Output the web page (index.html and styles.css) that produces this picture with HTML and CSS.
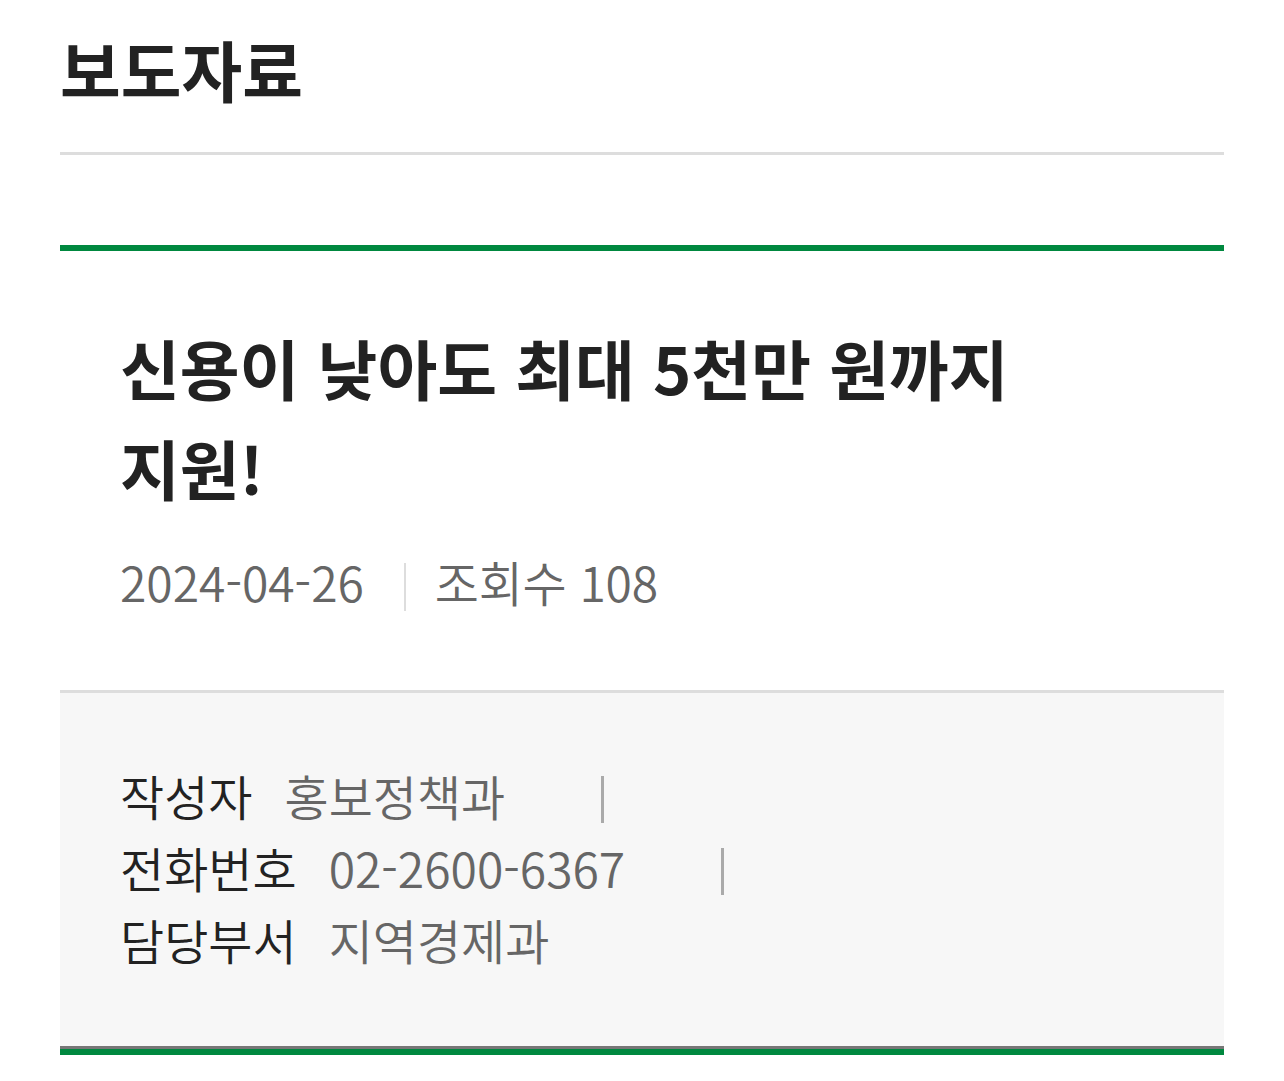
FILE: index.html
```html
<!DOCTYPE html>
<html lang="ko">
	<head>
		<meta charset="UTF-8">
		<title>보도자료</title>
		<link rel="stylesheet" href="styles.css">
	</head>
	<body>
		<div id="container">
			<div class="page-head">
				<h1>보도자료</h1>
			</div>
			<div class="board-view">
				<div class="view-head">
					<h2 class="subject">신용이 낮아도 최대 5천만 원까지 지원!</h2>
					<div class="meta">
						<span class="date">2024-04-26</span>
						<span class="bar"></span>
						<span class="hit">조회수 108</span>
					</div>
				</div>
				<ul class="info">
					<li><span class="label">작성자</span><span class="value">홍보정책과</span></li>
					<li><span class="label">전화번호</span><span class="value">02-2600-6367</span></li>
					<li><span class="label">담당부서</span><span class="value">지역경제과</span></li>
				</ul>
				<div class="view-body"></div>
			</div>
		</div>
	</body>
</html>
```

FILE: styles.css
```css
/* 기본 여백 제거 */
* {
	margin: 0;
	padding: 0;
	box-sizing: border-box;
}
body {
	font-family: "Noto Sans CJK KR", "Noto Sans", sans-serif;
	color: #222;
	background: #fff;
}
ul {
	list-style: none;
}
#container {
	padding: 0 60px;
}
/* 페이지 제목 */
.page-head {
	padding: 24px 0 40px;
	border-bottom: 3px solid #ddd;
}
.page-head h1 {
	font-size: 66px;
	font-weight: 700;
	line-height: 88px;
}
/* 게시물 상단 */
.board-view {
	margin-top: 90px;
	border-top: 6px solid #00883f;
}
.view-head {
	padding: 66px 60px 79px;
}
.subject {
	font-size: 65px;
	font-weight: 700;
	line-height: 100px;
	word-break: keep-all;
	padding-right: 100px;
}
.meta {
	display: flex;
	align-items: flex-start;
	margin-top: 34px;
	font-size: 48px;
	font-weight: 350;
	line-height: 60px;
	color: #666;
}
.meta .bar {
	width: 2px;
	height: 48px;
	margin: 12px 29px 0 40px;
	background: #ddd;
}
.meta .hit {
	letter-spacing: -0.3px;
}
/* 작성자 정보 */
.info {
	padding: 66px 60px 71px;
	background: #f7f7f7;
	border-top: 3px solid #ddd;
	border-bottom: 3px solid #777;
	font-size: 48px;
	font-weight: 350;
	line-height: 72px;
}
.info li {
	display: flex;
	align-items: flex-start;
}
.info .label {
	margin-right: 32px;
	color: #222;
}
.info .value {
	color: #666;
}
.info li:not(:last-child)::after {
	content: "";
	width: 3px;
	height: 47px;
	margin: 17px 0 0 96px;
	background: #aaa;
}
.view-body {
	border-top: 6px solid #00883f;
	height: 40px;
}
```
